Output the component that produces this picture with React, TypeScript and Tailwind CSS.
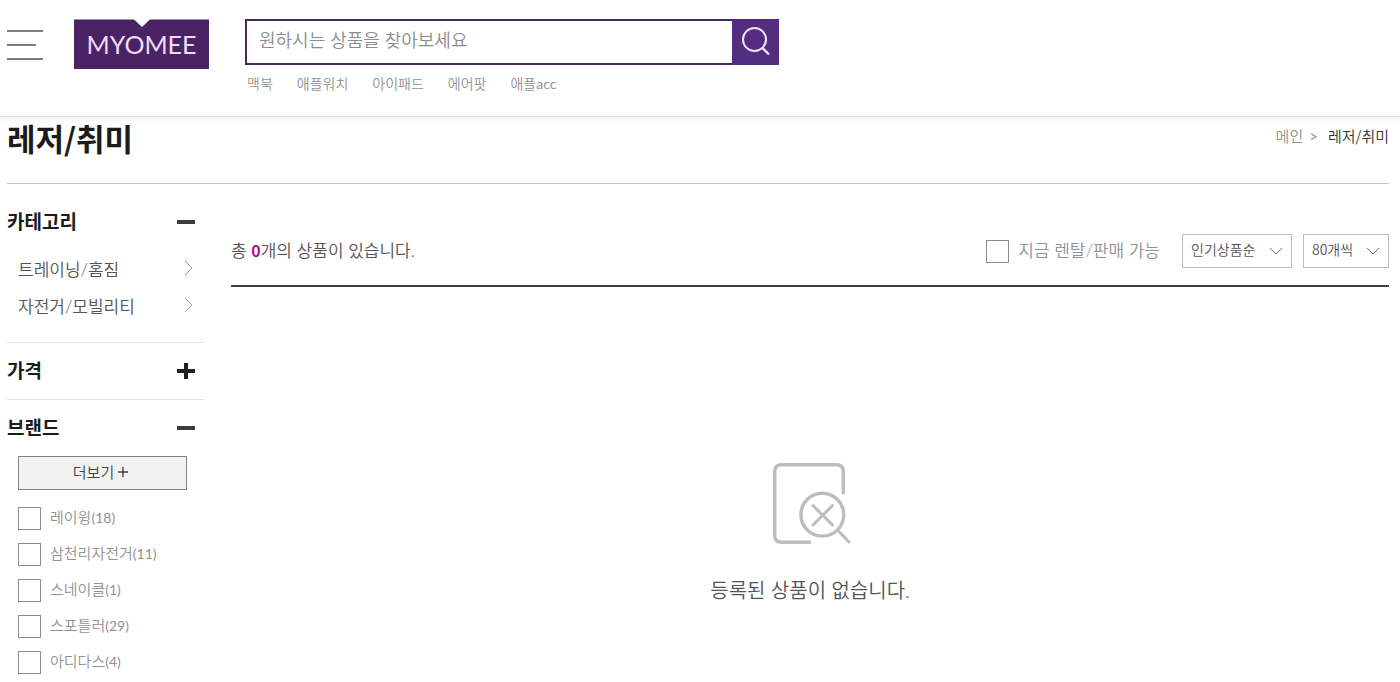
import type { ReactNode } from 'react';

type Keyword = {
  label: string;
  suffix?: string;
};

type Brand = {
  key: string;
  label: string;
  count: number;
};

const keywords: Keyword[] = [
  { label: '맥북' },
  { label: '애플워치' },
  { label: '아이패드' },
  { label: '에어팟' },
  { label: '애플', suffix: 'acc' },
];

const categories = ['트레이닝/홈짐', '자전거/모빌리티'];

const brands: Brand[] = [
  { key: 'raywing', label: '레이윙', count: 18 },
  { key: 'samchuly', label: '삼천리자전거', count: 11 },
  { key: 'snakle', label: '스네이클', count: 1 },
  { key: 'spotler', label: '스포틀러', count: 29 },
  { key: 'adidas', label: '아디다스', count: 4 },
];

const checkboxClass = 'size-[23px] shrink-0 appearance-none border border-[#8c8c8c] bg-white checked:bg-[#4b2366]';

function Logo() {
  return (
    <a href="#" aria-label="MYOMEE" className="ml-[31px] block shrink-0">
      <svg width="135" height="50" viewBox="0 0 135 50">
        <path d="M0 0.500H60L68 8L76 0.500H135V50H0Z" fill="#4a2364" />
        <text x="67.5" y="35" textAnchor="middle" fontFamily="Lato, sans-serif" fontSize="25" fontWeight="400" fill="#f0dcf8">
          MYOMEE
        </text>
      </svg>
    </a>
  );
}

function Header() {
  return (
    <header className="border-b border-[#dcdcdc] pr-[11px] pb-5 pl-[7px] shadow-[0_2px_6px_rgba(0,0,0,0.05)]">
      <div className="flex items-start pt-[19px]">
        <button type="button" aria-label="메뉴" className="mt-[11px] flex shrink-0 flex-col gap-3">
          <span className="h-0.5 w-9 bg-[#7c7c7c]" />
          <span className="h-0.5 w-[29px] bg-[#7c7c7c]" />
          <span className="h-0.5 w-9 bg-[#7c7c7c]" />
        </button>
        <Logo />
        <div className="ml-9 w-full max-w-[534px]">
          <form className="flex h-[46px]">
            <input
              type="text"
              aria-label="상품 검색"
              placeholder="원하시는 상품을 찾아보세요"
              className="min-w-0 flex-1 border-2 border-r-0 border-[#452a5c] px-3 pb-1 text-lg text-[#333] outline-none placeholder:text-[#8c8c8c]"
            />
            <button type="button" aria-label="검색" className="flex w-[47px] items-center justify-center bg-[#522d80]">
              <svg width="30" height="30" viewBox="0 0 30 30" fill="none" stroke="#f3e4ff" strokeWidth="2">
                <circle cx="13.500" cy="12.500" r="11.500" />
                <path d="M21 20.500L28 27.500" strokeWidth="2.4" />
              </svg>
            </button>
          </form>
          <nav className="mt-[7px] flex gap-6 pl-0.5 text-sm leading-6 text-[#929292]">
            {keywords.map((keyword) => (
              <a key={keyword.label + (keyword.suffix ?? '')} href="#">
                {keyword.label}
                {keyword.suffix && <span className="font-normal">{keyword.suffix}</span>}
              </a>
            ))}
          </nav>
        </div>
      </div>
    </header>
  );
}

function PlusMinus({ open }: { open: boolean }) {
  return (
    <svg width="18" height="18" viewBox="0 0 18 18" fill={open ? '#3c3c3f' : '#1f1f1f'}>
      <rect x="0" y="7" width="18" height="4" />
      {!open && <rect x="7" y="1" width="4" height="16" />}
    </svg>
  );
}

function FilterSection({ title, open, children }: { title: string; open: boolean; children?: ReactNode }) {
  return (
    <section className="border-b border-[#e3e3e3] last:border-b-0">
      <h2>
        <button type="button" aria-expanded={open} className="flex h-14 w-full items-center justify-between pr-[9px] text-[19px] font-bold text-[#1c1c1c]">
          {title}
          <PlusMinus open={open} />
        </button>
      </h2>
      {children}
    </section>
  );
}

function Sidebar() {
  return (
    <aside className="w-[197px] shrink-0 pt-[10px]">
      <FilterSection title="카테고리" open>
        <ul className="pt-px pb-[17px] pl-[11px]">
          {categories.map((category) => (
            <li key={category}>
              <a href="#" className="flex h-[37px] items-center justify-between pr-[11px] text-[17px] text-[#555]">
                {category}
                <svg width="9" height="16" viewBox="0 0 9 16" fill="none" stroke="#9a9a9a" className="mb-1">
                  <path d="M1 1L8 8L1 15" />
                </svg>
              </a>
            </li>
          ))}
        </ul>
      </FilterSection>
      <FilterSection title="가격" open={false} />
      <FilterSection title="브랜드" open>
        <div className="pr-[17px] pl-[11px]">
          <button type="button" className="flex h-[34px] w-full items-center justify-center gap-1 border border-[#828282] bg-[#f2f2f2] pr-1 pb-0.5 text-[15px] text-[#444]">
            더보기
            <svg width="10" height="10" viewBox="0 0 10 10" stroke="#444" strokeWidth="1.4">
              <path d="M5 0V10M0 5H10" />
            </svg>
          </button>
          <ul className="pt-[10px]">
            {brands.map((brand) => (
              <li key={brand.key}>
                <label className="flex h-9 items-center gap-[9px] text-[15px] text-[#929292]">
                  <input type="checkbox" name={brand.key} className={checkboxClass} />
                  <span className="pb-0.5 whitespace-nowrap">
                    {brand.label}
                    <span className="text-sm font-normal">({brand.count})</span>
                  </span>
                </label>
              </li>
            ))}
          </ul>
        </div>
      </FilterSection>
    </aside>
  );
}

function SelectBox({ label, value, className }: { label: string; value: string; className: string }) {
  return (
    <div className={`relative ${className}`}>
      <select
        aria-label={label}
        className="h-[34px] w-full appearance-none border border-[#bdbdbd] bg-white pb-1 pl-2 font-['Noto_Sans_CJK_KR',sans-serif] text-sm text-[#555]"
      >
        <option>{value}</option>
      </select>
      <svg width="14" height="8" viewBox="0 0 14 8" fill="none" stroke="#777" className="pointer-events-none absolute top-[13px] right-[9px]">
        <path d="M1 1L7 7L13 1" />
      </svg>
    </div>
  );
}

function EmptyIcon() {
  return (
    <svg width="82" height="84" viewBox="0 0 82 84" fill="none" stroke="#bdbdbd" strokeWidth="3.400" strokeLinecap="round">
      <path d="M74.300 32V9.700Q74.300 2.700 67.300 2.700H12.700Q5.700 2.700 5.700 9.700V73.300Q5.700 80.300 12.700 80.300H42" strokeLinecap="butt" />
      <circle cx="53.300" cy="52.700" r="21.400" />
      <path d="M69 68.500L80 80M44 43.500L63.500 63M63.500 43.500L44 63" strokeWidth="3" />
    </svg>
  );
}

function ProductList() {
  return (
    <main className="min-w-0 flex-1 pt-[50px]">
      <div className="flex items-center justify-between border-b-2 border-[#3e3e42] pb-[17px]">
        <p className="text-[17px] text-[#555]">
          총 <strong className="font-['Noto_Sans_CJK_KR',sans-serif] text-base font-bold text-[#b5117f]">0</strong>개의 상품이 있습니다.
        </p>
        <div className="flex items-center">
          <label className="mr-[22px] flex items-center gap-[9px] text-[17px] text-[#929292]">
            <input type="checkbox" name="available" className={checkboxClass} />
            지금 렌탈/판매 가능
          </label>
          <SelectBox label="정렬" value="인기상품순" className="mr-[11px] w-[110px]" />
          <SelectBox label="표시 개수" value="80개씩" className="w-[86px]" />
        </div>
      </div>
      <div className="flex flex-col items-center pt-[175px]">
        <EmptyIcon />
        <p className="mt-[30px] text-xl text-[#555]">등록된 상품이 없습니다.</p>
      </div>
    </main>
  );
}

export default function App() {
  return (
    <div className="bg-white font-['Lato','Noto_Sans_CJK_KR',sans-serif] font-[350]">
      <Header />
      <div className="pr-[11px] pl-[7px]">
        <div className="flex items-start justify-between border-b border-[#c4c4c4] pb-[24px]">
          <h1 className="font-['Noto_Sans_CJK_KR',sans-serif] text-[31px] leading-[42px] font-bold text-[#1c1c1c]">레저/취미</h1>
          <nav className="flex gap-[6px] pt-[7px] text-[15px] leading-6 text-[#929292]">
            <a href="#">메인</a>
            <span className="font-normal">&gt;</span>
            <a href="#" className="ml-1 font-['Noto_Sans_CJK_KR',sans-serif] text-[#333]">
              레저/취미
            </a>
          </nav>
        </div>
        <div className="flex gap-[27px]">
          <Sidebar />
          <ProductList />
        </div>
      </div>
    </div>
  );
}
